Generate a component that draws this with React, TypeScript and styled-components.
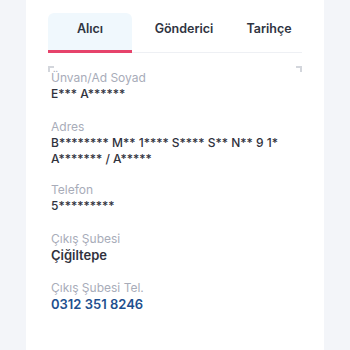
import React, { useState } from 'react';
import styled, { createGlobalStyle } from 'styled-components';

const GlobalStyle = createGlobalStyle`
  html, body {
    margin: 0;
    padding: 0;
    background: #f3f5f9;
    font-family: Inter, "Noto Sans", sans-serif;
  }
`;

const Page = styled.div`
  width: 350px;
  height: 350px;
  padding: 0 26px;
  box-sizing: border-box;
  overflow: hidden;
`;

const Card = styled.section`
  height: 100%;
  background: #fff;
  padding: 13px 22px 0;
`;

const Tabs = styled.div`
  display: grid;
  grid-template-columns: 84px 104px 1fr;
  border-bottom: 1px solid #eef0f4;
`;

const Tab = styled.button<{ active?: boolean }>`
  height: 40px;
  border: 0;
  border-bottom: 3px solid ${(p) => (p.active ? '#e6436b' : 'transparent')};
  margin-bottom: -1px;
  border-radius: 6px 6px 0 0;
  background: ${(p) => (p.active ? '#f0f8fd' : 'transparent')};
  color: #2f3441;
  font-family: inherit;
  font-size: 12.5px;
  font-weight: 600;
  padding: 0 0 6px;
  cursor: pointer;
`;

const Info = styled.div`
  position: relative;
  padding: 4px 3px 0;
  margin-top: 13px;

  &::before,
  &::after {
    content: '';
    position: absolute;
    top: 0;
    width: 4px;
    height: 4px;
    border-top: 2px solid #d3d6dc;
  }
  &::before {
    left: 0;
    border-left: 2px solid #d3d6dc;
  }
  &::after {
    right: 0;
    border-right: 2px solid #d3d6dc;
  }
`;

const Field = styled.div<{ tight?: boolean }>`
  display: flex;
  flex-direction: column;
  margin-bottom: ${(p) => (p.tight ? '15px' : '17px')};
`;

const Label = styled.div`
  font-size: 12px;
  line-height: 16px;
  color: #a8acb9;
`;

const Value = styled.div<{ tone?: 'dark' | 'blue'; strong?: boolean }>`
  font-size: ${(p) => (p.strong ? '13px' : '12px')};
  line-height: 16px;
  font-weight: ${(p) => (p.strong ? 600 : 500)};
  color: ${(p) => (p.tone === 'blue' ? '#1e4f8e' : '#30323d')};
`;

const tabs = ['Alıcı', 'Gönderici', 'Tarihçe'];

export default function App() {
  const [active, setActive] = useState(0);

  return (
    <>
      <GlobalStyle />
      <Page>
        <Card>
          <Tabs>
            {tabs.map((t, i) => (
              <Tab key={t} active={i === active} onClick={() => setActive(i)}>
                {t}
              </Tab>
            ))}
          </Tabs>
          <Info>
            <Field>
              <Label>Ünvan/Ad Soyad</Label>
              <Value>E*** A******</Value>
            </Field>
            <Field tight>
              <Label>Adres</Label>
              <Value>
                B******** M** 1**** S**** S** N** 9 1*
                <br />
                A******* / A*****
              </Value>
            </Field>
            <Field>
              <Label>Telefon</Label>
              <Value>5*********</Value>
            </Field>
            <Field>
              <Label>Çıkış Şubesi</Label>
              <Value strong>Çiğiltepe</Value>
            </Field>
            <Field>
              <Label>Çıkış Şubesi Tel.</Label>
              <Value strong tone="blue">
                0312 351 8246
              </Value>
            </Field>
          </Info>
        </Card>
      </Page>
    </>
  );
}
